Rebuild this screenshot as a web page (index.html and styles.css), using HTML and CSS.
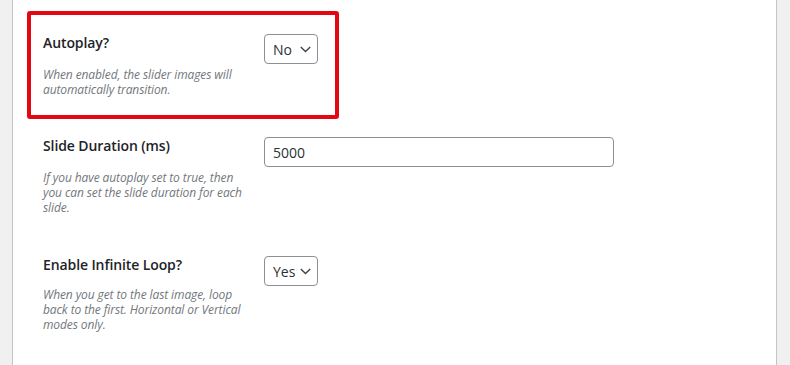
FILE: index.html
```html
<!DOCTYPE html>
<html>

<head>
    <meta name="viewport" content="width=device-width, initial-scale=1.0">
    <title>Slider settings</title>
    <link rel="stylesheet" href="styles.css">
</head>

<body>
    <div class="page">
        <div class="panel">
            <div class="highlight"></div>

            <div class="row">
                <div class="label">
                    <div class="title">Autoplay?</div>
                    <p class="description">When enabled, the slider images will automatically transition.</p>
                </div>
                <div class="field">
                    <div class="select">
                        <span>No</span>
                        <svg class="chevron" width="11" height="7" viewBox="0 0 11 7">
                            <path d="M0.8 1 L5.5 5.6 L10.2 1" fill="none" stroke="#3c434a" stroke-width="1.4"></path>
                        </svg>
                    </div>
                </div>
            </div>

            <div class="row">
                <div class="label">
                    <div class="title">Slide Duration (ms)</div>
                    <p class="description">If you have autoplay set to true, then you can set the slide duration for each slide.</p>
                </div>
                <div class="field">
                    <input type="text" class="text-input" value="5000">
                </div>
            </div>

            <div class="row last">
                <div class="label">
                    <div class="title">Enable Infinite Loop?</div>
                    <p class="description">When you get to the last image, loop back to the first. Horizontal or Vertical modes only.</p>
                </div>
                <div class="field">
                    <div class="select">
                        <span>Yes</span>
                        <svg class="chevron" width="11" height="7" viewBox="0 0 11 7">
                            <path d="M0.8 1 L5.5 5.6 L10.2 1" fill="none" stroke="#3c434a" stroke-width="1.4"></path>
                        </svg>
                    </div>
                </div>
            </div>
        </div>
    </div>
</body>

</html>
```

FILE: styles.css
```css
* {
    box-sizing: border-box;
    font-family: "Open Sans", "Noto Sans", sans-serif;
}

body {
    margin: 0;
    background-color: #f0f0f1;
}

.page {
    height: 365px;
    padding-left: 12px;
    overflow: hidden;
}

.panel {
    position: relative;
    width: 765px;
    height: 100%;
    background-color: #fff;
    border-left: 1px solid #c3c4c7;
    border-right: 1px solid #c3c4c7;
    padding-top: 15px;
}

/* red annotation box drawn round the first row */
.highlight {
    position: absolute;
    left: 14px;
    top: 11px;
    width: 312px;
    height: 108px;
    border: 4px solid #e30613;
    border-radius: 3px;
}

.row {
    display: flex;
    padding: 18px 0 21px 30px;
}

.row.last {
    padding-top: 19px;
}

.label {
    width: 221px;
}

.title {
    font-size: 14px;
    font-weight: 600;
    line-height: 20px;
    color: #1d2327;
    letter-spacing: -0.1px;
}

.description {
    margin: 14px 0 0;
    font-size: 12px;
    font-style: italic;
    line-height: 15px;
    color: #72777c;
    padding-right: 14px;
    letter-spacing: -0.1px;
}

.row.last .description {
    margin-top: 12px;
}

.field {
    flex: 1;
}

.select {
    display: flex;
    align-items: center;
    justify-content: space-between;
    width: 54px;
    height: 30px;
    margin-top: 1px;
    padding: 0 6px 0 8px;
    border: 1px solid #8c8f94;
    border-radius: 4px;
    font-size: 14px;
    color: #2c3338;
}

.text-input {
    width: 350px;
    height: 30px;
    padding: 0 8px;
    border: 1px solid #8c8f94;
    border-radius: 4px;
    font-size: 14px;
    color: #2c3338;
    margin-top: 1px;
}
```
